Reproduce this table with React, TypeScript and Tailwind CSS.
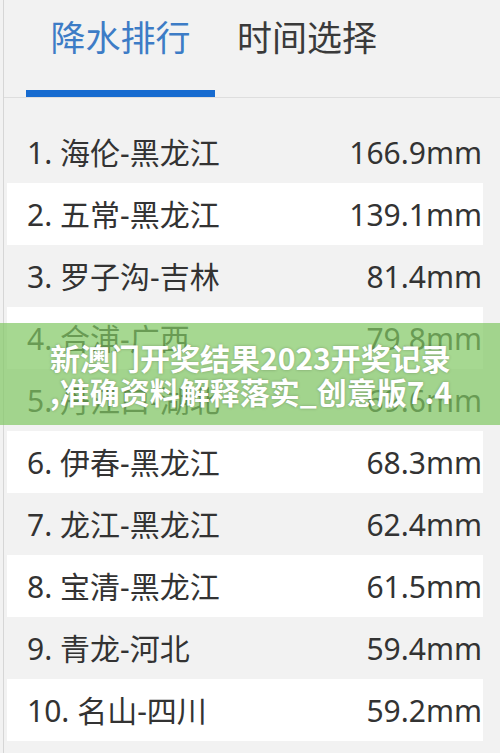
const rows = [
  { name: "1. 海伦-黑龙江", value: "166.9mm" },
  { name: "2. 五常-黑龙江", value: "139.1mm" },
  { name: "3. 罗子沟-吉林", value: "81.4mm" },
  { name: "4. 合浦-广西", value: "79.8mm" },
  { name: "5. 丹江口-湖北", value: "69.6mm" },
  { name: "6. 伊春-黑龙江", value: "68.3mm" },
  { name: "7. 龙江-黑龙江", value: "62.4mm" },
  { name: "8. 宝清-黑龙江", value: "61.5mm" },
  { name: "9. 青龙-河北", value: "59.4mm" },
  { name: "10. 名山-四川", value: "59.2mm" },
]

export default function App() {
  return (
    <div className="relative h-[753px] w-[500px] overflow-hidden bg-[#f2f2f2] font-['Noto_Sans','Noto_Sans_CJK_SC',sans-serif] text-[#333]">
      <div className="ml-[3px] h-full border-l border-[#d6d6d6]">
        {/* Tabs */}
        <div className="flex h-[98px] border-b border-[#dedede]">
          <div className="ml-[22px] flex w-[189px] flex-col items-center">
            <span className="mt-[20px] text-[35px] leading-[36px] text-[#3d7cc6]">
              降水排行
            </span>
            <span className="mt-auto h-[7px] w-full bg-[#176bd0]" />
          </div>
          <div className="ml-[22px] flex flex-col">
            <span className="mt-[20px] text-[35px] leading-[36px] text-[#3a3a3a]">
              时间选择
            </span>
          </div>
        </div>

        {/* Ranking list */}
        <div className="mt-[23px] ml-[3px] w-[476px]">
          {rows.map((row, i) => (
            <div
              key={row.name}
              className={`flex h-[62px] items-center justify-between pl-[20px] pr-[1px] text-[30px] ${
                i % 2 === 1 ? "bg-white" : ""
              }`}
            >
              <span>{row.name}</span>
              <span>{row.value}</span>
            </div>
          ))}
        </div>
      </div>

      {/* Watermark banner */}
      <div className="absolute left-0 right-0 top-[323px] h-[102px] overflow-hidden bg-[rgba(128,200,98,0.7)] pl-[50px] pt-[17px] font-['Noto_Sans_CJK_SC',sans-serif] text-[30px] font-bold leading-[34px] text-white [text-shadow:0_0_3px_rgba(0,0,0,0.25)]">
        <div className="whitespace-nowrap">新澳门开奖结果2023开奖记录</div>
        <div className="whitespace-nowrap">,准确资料解释落实_创意版7.4</div>
      </div>
    </div>
  )
}
